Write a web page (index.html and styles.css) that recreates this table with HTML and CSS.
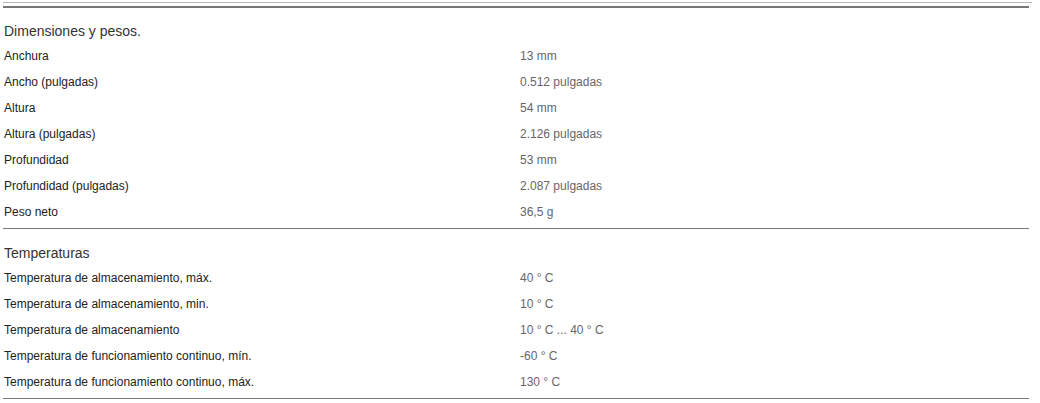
FILE: index.html
```html
<!DOCTYPE html>
<html lang="es">
<head>
    <meta charset="UTF-8">
    <title>Especificaciones</title>
    <link rel="stylesheet" href="styles.css">
</head>
<body>

<div class="specs">
    <div class="top-rule"></div>

    <!-- Dimensiones -->
    <div class="group first">
        <h3>Dimensiones y pesos.</h3>
        <div class="row"><span class="label">Anchura</span><span class="value">13 mm</span></div>
        <div class="row"><span class="label">Ancho (pulgadas)</span><span class="value">0.512 pulgadas</span></div>
        <div class="row"><span class="label">Altura</span><span class="value">54 mm</span></div>
        <div class="row"><span class="label">Altura (pulgadas)</span><span class="value">2.126 pulgadas</span></div>
        <div class="row"><span class="label">Profundidad</span><span class="value">53 mm</span></div>
        <div class="row"><span class="label">Profundidad (pulgadas)</span><span class="value">2.087 pulgadas</span></div>
        <div class="row"><span class="label">Peso neto</span><span class="value">36,5 g</span></div>
    </div>

    <!-- Temperaturas -->
    <div class="group">
        <h3>Temperaturas</h3>
        <div class="row"><span class="label">Temperatura de almacenamiento, máx.</span><span class="value">40 ° C</span></div>
        <div class="row"><span class="label">Temperatura de almacenamiento, min.</span><span class="value">10 ° C</span></div>
        <div class="row"><span class="label">Temperatura de almacenamiento</span><span class="value">10 ° C ... 40 ° C</span></div>
        <div class="row"><span class="label">Temperatura de funcionamiento continuo, mín.</span><span class="value">-60 ° C</span></div>
        <div class="row"><span class="label">Temperatura de funcionamiento continuo, máx.</span><span class="value">130 ° C</span></div>
    </div>
    <div class="group end"></div>
</div>

</body>
</html>
```

FILE: styles.css
```css
* {
    margin: 0;
    padding: 0;
    box-sizing: border-box;
}

body {
    font-family: Arial, 'Liberation Sans', sans-serif;
    background: #fff;
    color: #222;
}

.specs {
    margin-left: 3px;
    width: 1026px;
    padding-top: 2px;
}

.top-rule {
    width: 1029px;
    border-top: 1px solid #bbb;
    margin-bottom: 3px;
}

.group {
    border-top: 1px solid #777;
    padding-bottom: 3px;
}

.group.first {
    border-top-width: 2px;
}

.group.end {
    padding: 0;
}

.group h3 {
    font-size: 14px;
    font-weight: normal;
    line-height: 20px;
    color: #333;
    padding: 14px 1px 2px;
}

.group.first h3 {
    padding-top: 13px;
}

.row {
    display: grid;
    grid-template-columns: 516px 1fr;
    height: 26px;
    line-height: 26px;
    font-size: 12px;
    padding-left: 1px;
}

.row .label {
    color: #222;
}

.row .value {
    color: #666;
}
```
